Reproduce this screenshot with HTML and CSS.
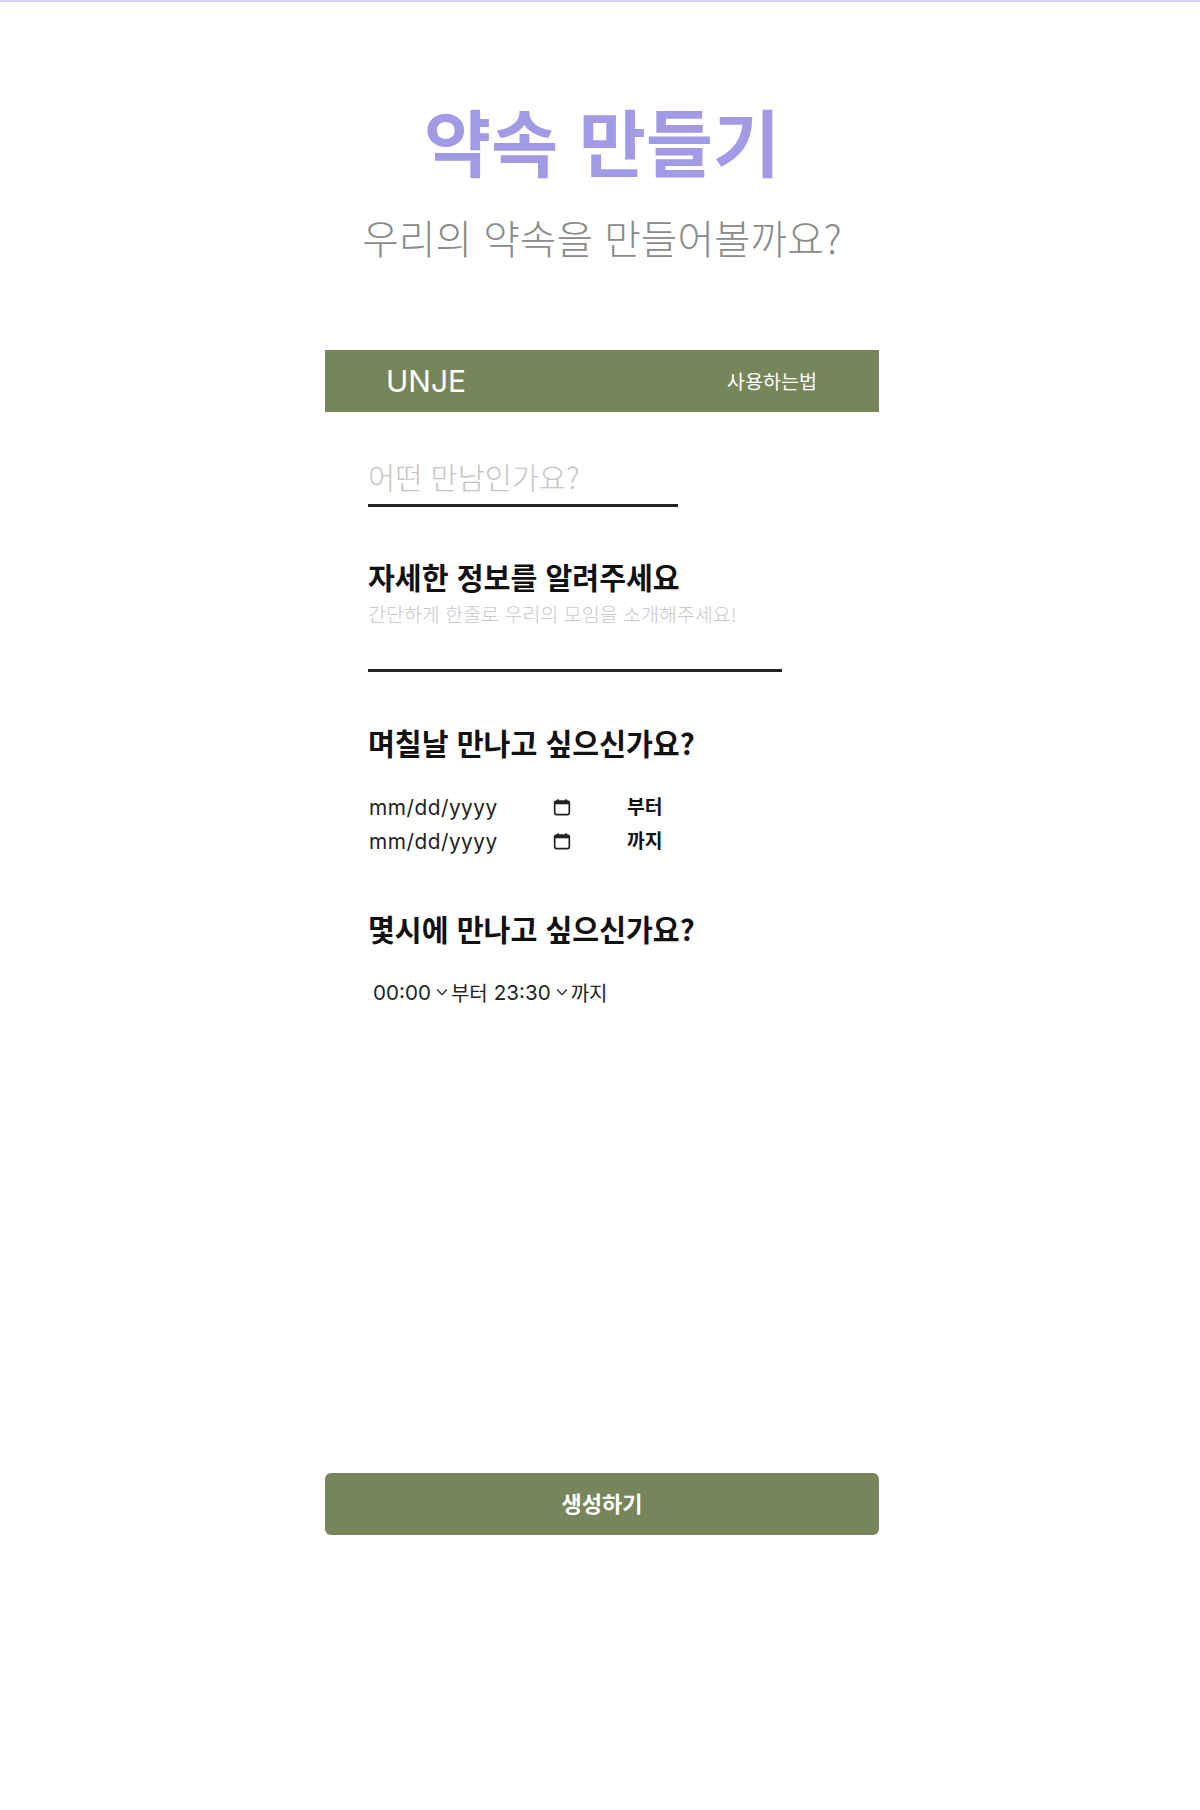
FILE: index.html
```html
<!DOCTYPE html>
<html lang="ko">
<head>
<meta charset="utf-8">
<title>약속 만들기</title>
<link rel="stylesheet" href="styles.css">
</head>
<body>
<main class="page">
  <header class="intro">
    <h1 class="title">약속 만들기</h1>
    <p class="subtitle">우리의 약속을 만들어볼까요?</p>
  </header>
  <nav class="navbar">
    <span class="brand">UNJE</span>
    <a class="help">사용하는법</a>
  </nav>
  <form class="form">
    <div class="field-name"><span class="name-text">어떤 만남인가요?</span></div>
    <h2 class="heading heading-info">자세한 정보를 알려주세요</h2>
    <div class="field-desc"><span class="desc-text">간단하게 한줄로 우리의 모임을 소개해주세요!</span></div>
    <h2 class="heading heading-date">며칠날 만나고 싶으신가요?</h2>
    <div class="date-rows">
      <div class="date-row">
        <span class="date-value">mm/dd/yyyy</span>
        <svg class="cal" viewBox="0 0 16 16" width="18" height="18"><path d="M4.5 1v2.5M11.5 1v2.5" stroke="#222" stroke-width="1.5" fill="none"/><rect x="1.5" y="2.8" width="13" height="11.9" rx="1.8" fill="none" stroke="#222" stroke-width="1.5"/><rect x="1.5" y="3" width="13" height="2.6" fill="#222"/></svg>
        <span class="date-label">부터</span>
      </div>
      <div class="date-row">
        <span class="date-value">mm/dd/yyyy</span>
        <svg class="cal" viewBox="0 0 16 16" width="18" height="18"><path d="M4.5 1v2.5M11.5 1v2.5" stroke="#222" stroke-width="1.5" fill="none"/><rect x="1.5" y="2.8" width="13" height="11.9" rx="1.8" fill="none" stroke="#222" stroke-width="1.5"/><rect x="1.5" y="3" width="13" height="2.6" fill="#222"/></svg>
        <span class="date-label">까지</span>
      </div>
    </div>
    <h2 class="heading heading-time">몇시에 만나고 싶으신가요?</h2>
    <div class="time-row">
      <span class="time-value">00:00</span>
      <svg class="chev" viewBox="0 0 12 8" width="12" height="8"><path d="M1 1.5l5 5 5-5" stroke="#333" stroke-width="1.4" fill="none"/></svg>
      <span class="time-word">부터</span>
      <span class="time-value time-second">23:30</span>
      <svg class="chev" viewBox="0 0 12 8" width="12" height="8"><path d="M1 1.5l5 5 5-5" stroke="#333" stroke-width="1.4" fill="none"/></svg>
      <span class="time-word">까지</span>
    </div>
  </form>
  <button class="submit" type="button">생성하기</button>
</main>
</body>
</html>
```

FILE: styles.css
```css
* { box-sizing: border-box; }
html, body { margin: 0; padding: 0; background: #fff; }
body {
  height: 1810px;
  border-top: 2px solid #d5d0f5;
  font-family: "Noto Sans CJK KR", "Noto Sans", sans-serif;
  color: #111;
}
.page {
  width: 554px;
  margin-left: 325px;
  display: flex;
  flex-direction: column;
}
.intro { text-align: center; padding-top: 93px; }
.title {
  margin: 0;
  font-size: 73px;
  line-height: 88px;
  font-weight: 700;
  color: #a39ae6;
}
.subtitle {
  margin: 26px 0 0;
  font-size: 39.8px;
  line-height: 56px;
  font-weight: 300;
  color: #8a8a8a;
}
.navbar {
  margin-top: 85px;
  height: 62px;
  background: #76855a;
  color: #fff;
  display: flex;
  align-items: center;
  justify-content: space-between;
  padding: 0 62px 0 61px;
}
.brand { font-family: Inter, sans-serif; font-size: 30px; }
.help { margin-bottom: 2px; font-size: 19.6px; }
.form { padding-left: 43px; display: flex; flex-direction: column; align-items: flex-start; }
.field-name {
  margin-top: 30px;
  width: 310px;
  height: 65px;
  padding-top: 9px;
  border-bottom: 3px solid #222;
}
.name-text { display: block; font-size: 29.5px; line-height: 50px; font-weight: 300; color: #c4c4c8; }
.heading { margin: 0; font-size: 29.2px; line-height: 42px; font-weight: 700; color: #111; }
.heading-info { margin-top: 48px; }
.field-desc {
  width: 414px;
  height: 75px;
  padding-top: 2px;
  border-bottom: 3px solid #222;
}
.desc-text { display: block; font-size: 19.5px; line-height: 30px; font-weight: 300; color: #c8c8cc; }
.heading-date { margin-top: 49px; }
.date-rows { margin-top: 30px; display: flex; flex-direction: column; gap: 6px; }
.date-row { display: flex; align-items: center; height: 28px; }
.date-value { width: 185px; padding-left: 1px; font-family: Inter, sans-serif; font-size: 20.8px; letter-spacing: .5px; color: #222; }
.cal { display: block; }
.date-label { margin: 0 0 3px 56px; font-size: 19.3px; font-weight: 700; }
.heading-time { margin-top: 52px; }
.time-row { margin-top: 28px; padding-left: 5px; display: flex; align-items: center; height: 30px; font-size: 20px; color: #222; }
.time-value { font-family: Inter, sans-serif; font-size: 20.6px; }
.chev { margin: 0 3px 0 5px; }
.time-second { margin-left: 6px; }
.submit {
  margin-top: 466px;
  width: 554px;
  height: 62px;
  padding: 0 0 4px;
  border: 0;
  border-radius: 6px;
  background: #76855a;
  color: #fff;
  font-family: inherit;
  font-size: 22px;
  font-weight: 700;
}
```
